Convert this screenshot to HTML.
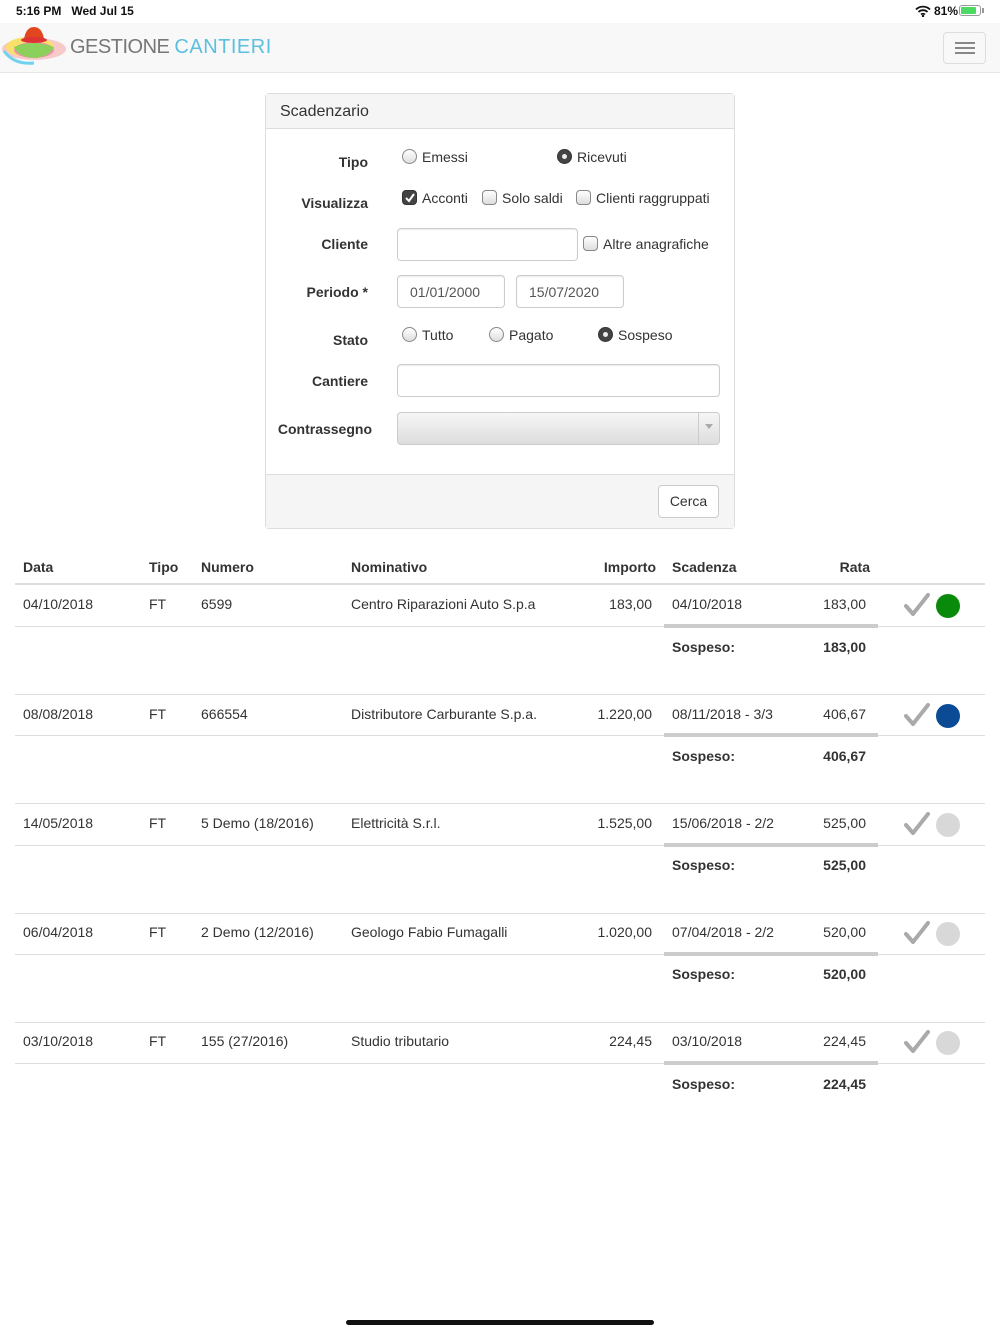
<!DOCTYPE html>
<html><head><meta charset="utf-8">
<style>
*{box-sizing:border-box;margin:0;padding:0}
body{width:1000px;height:1334px;position:relative;background:#fff;font-family:"Liberation Sans",Arial,sans-serif;font-size:14px;color:#333;overflow:hidden}
.a{position:absolute;white-space:nowrap}
.b{font-weight:bold}
.r{text-align:right}
.lbl{position:absolute;font-weight:bold;text-align:right;width:100px;left:268px}
.inp{position:absolute;border:1px solid #ccc;border-radius:4px;background:#fff;box-shadow:inset 0 1px 1px rgba(0,0,0,.075)}
.rad{position:absolute;width:15px;height:15px;border-radius:50%;border:1px solid #888;background:linear-gradient(#fff,#ddd)}
.rad.on{background:#444;border-color:#333}
.rad.on::after{content:"";position:absolute;left:4px;top:4px;width:5px;height:5px;border-radius:50%;background:#eee}
.chk{position:absolute;width:15px;height:15px;border-radius:4px;border:1px solid #888;background:linear-gradient(#fff,#ddd)}
.chk.on{background:#444;border-color:#333}
.hl{position:absolute;left:15px;width:970px;height:1px;background:#ddd}
.dot{position:absolute;width:24px;height:24px;border-radius:50%}
</style></head><body>
<!-- status bar -->
<div class="a" style="left:16px;top:4px;font-size:12px;font-weight:bold;color:#111">5:16 PM&nbsp;&nbsp;&nbsp;Wed Jul 15</div>
<div class="a" style="left:934px;top:4px;font-size:12px;font-weight:bold;color:#111">81%</div>
<svg class="a" style="left:915px;top:5px" width="16" height="12" viewBox="0 0 16 12"><path d="M1 4.5a10 10 0 0 1 14 0M3.5 7a6.5 6.5 0 0 1 9 0M6 9.5a3 3 0 0 1 4 0" stroke="#111" stroke-width="1.8" fill="none"/><circle cx="8" cy="11" r="1.2" fill="#111"/></svg>
<div class="a" style="left:959px;top:5px;width:22px;height:11px;border:1px solid #999;border-radius:3px;padding:1px"><div style="width:15px;height:7px;background:#4cd964;border-radius:1px"></div></div>
<div class="a" style="left:982px;top:8px;width:2px;height:5px;background:#999"></div>
<!-- navbar -->
<div class="a" style="left:0;top:23px;width:1000px;height:50px;background:#f8f8f8;border-bottom:1px solid #e7e7e7"></div>
<svg class="a" style="left:0;top:25px" width="70" height="46" viewBox="0 0 70 46">
<ellipse cx="34" cy="24" rx="32" ry="11" fill="#f7c9c9"/>
<ellipse cx="30" cy="22" rx="24" ry="10" fill="#f8e06a"/>
<ellipse cx="34" cy="25" rx="20" ry="8" fill="#f48fb1"/>
<path d="M14 22q18-8 40 0q-4 10-20 11q-16-1-20-11z" fill="#8bd05a"/>
<path d="M24 14q2-12 10-12t10 12q-10 4-20 0z" fill="#e2461f"/>
<ellipse cx="34" cy="15" rx="13" ry="3" fill="#d33"/>
<path d="M4 26q10 14 30 12" stroke="#6fd3f0" stroke-width="3" fill="none"/>
</svg>
<div class="a" style="left:70px;top:36px;font-size:20px;color:#777;letter-spacing:-0.5px">GESTIONE <span style="color:#5bc0de;letter-spacing:0.5px">CANTIERI</span></div>
<div class="a" style="left:943px;top:32px;width:43px;height:32px;border:1px solid #ddd;border-radius:4px">
<div style="position:absolute;left:11px;top:9px;width:20px;height:2px;background:#888"></div>
<div style="position:absolute;left:11px;top:14px;width:20px;height:2px;background:#888"></div>
<div style="position:absolute;left:11px;top:19px;width:20px;height:2px;background:#888"></div></div>
<!-- panel -->
<div class="a" style="left:265px;top:93px;width:470px;height:436px;border:1px solid #ddd;border-radius:4px;background:#fff"></div>
<div class="a" style="left:266px;top:94px;width:468px;height:35px;background:#f5f5f5;border-bottom:1px solid #ddd"></div>
<div class="a" style="left:280px;top:103px;font-size:16px">Scadenzario</div>
<div class="a" style="left:266px;top:474px;width:468px;height:54px;background:#f5f5f5;border-top:1px solid #ddd"></div>
<div class="a" style="left:658px;top:485px;width:61px;height:33px;border:1px solid #ccc;border-radius:4px;background:#fff;text-align:center;line-height:31px">Cerca</div>

<div class="lbl" style="top:154px">Tipo</div>
<div class="rad" style="left:402px;top:149px"></div><div class="a" style="left:422px;top:149px">Emessi</div>
<div class="rad on" style="left:557px;top:149px"></div><div class="a" style="left:577px;top:149px">Ricevuti</div>

<div class="lbl" style="top:195px">Visualizza</div>
<div class="chk on" style="left:402px;top:190px"><svg width="13" height="13" style="position:absolute;left:0;top:0"><path d="M3 7l3 3 5-7" stroke="#fff" stroke-width="2" fill="none"/></svg></div><div class="a" style="left:422px;top:190px">Acconti</div>
<div class="chk" style="left:482px;top:190px"></div><div class="a" style="left:502px;top:190px">Solo saldi</div>
<div class="chk" style="left:576px;top:190px"></div><div class="a" style="left:596px;top:190px">Clienti raggruppati</div>

<div class="lbl" style="top:236px">Cliente</div>
<div class="inp" style="left:397px;top:228px;width:181px;height:33px"></div>
<div class="chk" style="left:583px;top:236px"></div><div class="a" style="left:603px;top:236px">Altre anagrafiche</div>

<div class="lbl" style="top:284px">Periodo *</div>
<div class="inp" style="left:397px;top:275px;width:108px;height:33px;padding:8px 12px;color:#555">01/01/2000</div>
<div class="inp" style="left:516px;top:275px;width:108px;height:33px;padding:8px 12px;color:#555">15/07/2020</div>

<div class="lbl" style="top:332px">Stato</div>
<div class="rad" style="left:402px;top:327px"></div><div class="a" style="left:422px;top:327px">Tutto</div>
<div class="rad" style="left:489px;top:327px"></div><div class="a" style="left:509px;top:327px">Pagato</div>
<div class="rad on" style="left:598px;top:327px"></div><div class="a" style="left:618px;top:327px">Sospeso</div>

<div class="lbl" style="top:373px">Cantiere</div>
<div class="inp" style="left:397px;top:364px;width:323px;height:33px"></div>

<div class="lbl" style="top:421px;left:268px;width:104px">Contrassegno</div>
<div class="a" style="left:397px;top:412px;width:323px;height:33px;border:1px solid #ccc;border-radius:4px;background:linear-gradient(#f6f6f6,#ddd)"></div>
<div class="a" style="left:698px;top:413px;width:1px;height:31px;background:#ccc"></div>
<div class="a" style="left:705px;top:424px;width:0;height:0;border-left:4px solid transparent;border-right:4px solid transparent;border-top:5px solid #aaa"></div>

<!-- table header -->
<div class="a b" style="left:23px;top:559px">Data</div>
<div class="a b" style="left:149px;top:559px">Tipo</div>
<div class="a b" style="left:201px;top:559px">Numero</div>
<div class="a b" style="left:351px;top:559px">Nominativo</div>
<div class="a b r" style="left:556px;top:559px;width:100px">Importo</div>
<div class="a b" style="left:672px;top:559px">Scadenza</div>
<div class="a b r" style="left:770px;top:559px;width:100px">Rata</div>
<div class="a" style="left:15px;top:583px;width:970px;height:2px;background:#ddd"></div>

<!-- rows -->
<div id="rows"></div>
<script></script>

<!-- row template manually -->
<div style="position:absolute;left:0;top:585px;width:1000px;height:110px">
<div class="a" style="left:23px;top:11px">04/10/2018</div><div class="a" style="left:149px;top:11px">FT</div><div class="a" style="left:201px;top:11px">6599</div><div class="a" style="left:351px;top:11px">Centro Riparazioni Auto S.p.a</div><div class="a r" style="left:552px;top:11px;width:100px">183,00</div><div class="a" style="left:672px;top:11px">04/10/2018</div><div class="a r" style="left:766px;top:11px;width:100px">183,00</div>
<svg class="a" style="left:904px;top:8px" width="26" height="24" viewBox="0 0 26 24"><path d="M2 13l7 8L24 2" stroke="#aaa" stroke-width="4" fill="none" stroke-linecap="round" stroke-linejoin="round"/></svg>
<div class="dot" style="left:936px;top:9px;background:#0a8a0a"></div>
<div class="hl" style="top:41px"></div><div class="a" style="left:664px;top:39px;width:214px;height:4px;background:#ccc"></div>
<div class="a b" style="left:672px;top:54px">Sospeso:</div><div class="a b r" style="left:766px;top:54px;width:100px">183,00</div>
<div class="hl" style="top:109px"></div></div>

<div style="position:absolute;left:0;top:694px;width:1000px;height:110px">
<div class="a" style="left:23px;top:12px">08/08/2018</div><div class="a" style="left:149px;top:12px">FT</div><div class="a" style="left:201px;top:12px">666554</div><div class="a" style="left:351px;top:12px">Distributore Carburante S.p.a.</div><div class="a r" style="left:552px;top:12px;width:100px">1.220,00</div><div class="a" style="left:672px;top:12px">08/11/2018 - 3/3</div><div class="a r" style="left:766px;top:12px;width:100px">406,67</div>
<svg class="a" style="left:904px;top:9px" width="26" height="24" viewBox="0 0 26 24"><path d="M2 13l7 8L24 2" stroke="#aaa" stroke-width="4" fill="none" stroke-linecap="round" stroke-linejoin="round"/></svg>
<div class="dot" style="left:936px;top:10px;background:#0b4a94"></div>
<div class="hl" style="top:41px"></div><div class="a" style="left:664px;top:39px;width:214px;height:4px;background:#ccc"></div>
<div class="a b" style="left:672px;top:54px">Sospeso:</div><div class="a b r" style="left:766px;top:54px;width:100px">406,67</div>
<div class="hl" style="top:109px"></div></div>

<div style="position:absolute;left:0;top:804px;width:1000px;height:110px">
<div class="a" style="left:23px;top:11px">14/05/2018</div><div class="a" style="left:149px;top:11px">FT</div><div class="a" style="left:201px;top:11px">5 Demo (18/2016)</div><div class="a" style="left:351px;top:11px">Elettricità S.r.l.</div><div class="a r" style="left:552px;top:11px;width:100px">1.525,00</div><div class="a" style="left:672px;top:11px">15/06/2018 - 2/2</div><div class="a r" style="left:766px;top:11px;width:100px">525,00</div>
<svg class="a" style="left:904px;top:8px" width="26" height="24" viewBox="0 0 26 24"><path d="M2 13l7 8L24 2" stroke="#aaa" stroke-width="4" fill="none" stroke-linecap="round" stroke-linejoin="round"/></svg>
<div class="dot" style="left:936px;top:9px;background:#d8d8d8"></div>
<div class="hl" style="top:41px"></div><div class="a" style="left:664px;top:39px;width:214px;height:4px;background:#ccc"></div>
<div class="a b" style="left:672px;top:53px">Sospeso:</div><div class="a b r" style="left:766px;top:53px;width:100px">525,00</div>
<div class="hl" style="top:109px"></div></div>

<div style="position:absolute;left:0;top:913px;width:1000px;height:110px">
<div class="a" style="left:23px;top:11px">06/04/2018</div><div class="a" style="left:149px;top:11px">FT</div><div class="a" style="left:201px;top:11px">2 Demo (12/2016)</div><div class="a" style="left:351px;top:11px">Geologo Fabio Fumagalli</div><div class="a r" style="left:552px;top:11px;width:100px">1.020,00</div><div class="a" style="left:672px;top:11px">07/04/2018 - 2/2</div><div class="a r" style="left:766px;top:11px;width:100px">520,00</div>
<svg class="a" style="left:904px;top:8px" width="26" height="24" viewBox="0 0 26 24"><path d="M2 13l7 8L24 2" stroke="#aaa" stroke-width="4" fill="none" stroke-linecap="round" stroke-linejoin="round"/></svg>
<div class="dot" style="left:936px;top:9px;background:#d8d8d8"></div>
<div class="hl" style="top:41px"></div><div class="a" style="left:664px;top:39px;width:214px;height:4px;background:#ccc"></div>
<div class="a b" style="left:672px;top:53px">Sospeso:</div><div class="a b r" style="left:766px;top:53px;width:100px">520,00</div>
<div class="hl" style="top:109px"></div></div>

<div style="position:absolute;left:0;top:1022px;width:1000px;height:110px">
<div class="a" style="left:23px;top:11px">03/10/2018</div><div class="a" style="left:149px;top:11px">FT</div><div class="a" style="left:201px;top:11px">155 (27/2016)</div><div class="a" style="left:351px;top:11px">Studio tributario</div><div class="a r" style="left:552px;top:11px;width:100px">224,45</div><div class="a" style="left:672px;top:11px">03/10/2018</div><div class="a r" style="left:766px;top:11px;width:100px">224,45</div>
<svg class="a" style="left:904px;top:8px" width="26" height="24" viewBox="0 0 26 24"><path d="M2 13l7 8L24 2" stroke="#aaa" stroke-width="4" fill="none" stroke-linecap="round" stroke-linejoin="round"/></svg>
<div class="dot" style="left:936px;top:9px;background:#d8d8d8"></div>
<div class="hl" style="top:41px"></div><div class="a" style="left:664px;top:39px;width:214px;height:4px;background:#ccc"></div>
<div class="a b" style="left:672px;top:54px">Sospeso:</div><div class="a b r" style="left:766px;top:54px;width:100px">224,45</div>
</div>

<div class="a" style="left:346px;top:1320px;width:308px;height:5px;border-radius:3px;background:#111"></div>
</body></html>
